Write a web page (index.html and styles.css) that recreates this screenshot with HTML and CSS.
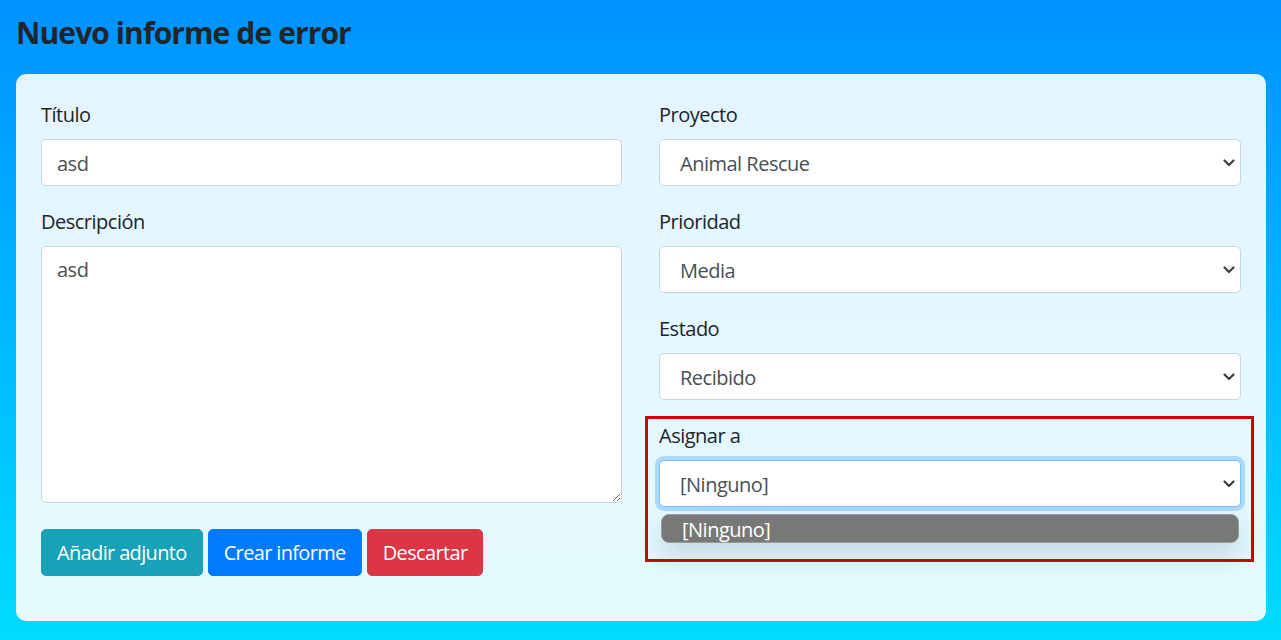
FILE: index.html
```html
<!DOCTYPE html>
<html lang="es">
<head>
<meta charset="utf-8">
<title>Nuevo informe de error</title>
<link rel="stylesheet" href="styles.css">
</head>
<body>
<h1 class="page-title">Nuevo informe de error</h1>
<form class="card">
  <div class="row">
    <div class="col">
      <div class="form-group">
        <label class="label">Título</label>
        <input class="form-control" type="text" value="asd">
      </div>
      <div class="form-group textarea-group">
        <label class="label">Descripción</label>
        <textarea class="form-control textarea">asd</textarea>
      </div>
      <div class="buttons">
        <button type="button" class="btn btn-info">Añadir adjunto</button>
        <button type="button" class="btn btn-primary">Crear informe</button>
        <button type="button" class="btn btn-danger">Descartar</button>
      </div>
    </div>
    <div class="col">
      <div class="form-group">
        <label class="label">Proyecto</label>
        <div class="select"><span>Animal Rescue</span><svg class="chev" width="12" height="8" viewBox="0 0 12 8"><polyline points="1.5,1.5 6,6 10.5,1.5" fill="none" stroke="#3c4043" stroke-width="2.2" stroke-linecap="round" stroke-linejoin="round"/></svg></div>
      </div>
      <div class="form-group">
        <label class="label">Prioridad</label>
        <div class="select"><span>Media</span><svg class="chev" width="12" height="8" viewBox="0 0 12 8"><polyline points="1.5,1.5 6,6 10.5,1.5" fill="none" stroke="#3c4043" stroke-width="2.2" stroke-linecap="round" stroke-linejoin="round"/></svg></div>
      </div>
      <div class="form-group">
        <label class="label">Estado</label>
        <div class="select"><span>Recibido</span><svg class="chev" width="12" height="8" viewBox="0 0 12 8"><polyline points="1.5,1.5 6,6 10.5,1.5" fill="none" stroke="#3c4043" stroke-width="2.2" stroke-linecap="round" stroke-linejoin="round"/></svg></div>
      </div>
      <div class="form-group assign-group">
        <label class="label">Asignar a</label>
        <div class="select focused"><span>[Ninguno]</span><svg class="chev" width="12" height="8" viewBox="0 0 12 8"><polyline points="1.5,1.5 6,6 10.5,1.5" fill="none" stroke="#3c4043" stroke-width="2.2" stroke-linecap="round" stroke-linejoin="round"/></svg></div>
        <div class="dropdown-list"><span>[Ninguno]</span></div>
        <div class="highlight-box"></div>
      </div>
    </div>
  </div>
</form>
</body>
</html>
```

FILE: styles.css
```css
* { box-sizing: border-box; }

html, body { height: 100%; }

body {
  margin: 0;
  min-height: 640px;
  padding: 15px 15px 0 16px;
  background: linear-gradient(180deg, #0092ff 0%, #00dcff 100%);
  font-family: "Open Sans", "Noto Sans", sans-serif;
  font-size: 20px;
  line-height: 1.5;
  letter-spacing: -0.5px;
  color: #212529;
  overflow: hidden;
}

.page-title {
  margin: 0 0 23px 0;
  font-size: 30px;
  line-height: 36px;
  font-weight: 700;
  letter-spacing: -0.9px;
  color: #212529;
}

.card {
  width: 1250px;
  padding: 25px;
  border-radius: 10px;
  background: rgba(255, 255, 255, 0.895);
}

.row {
  display: grid;
  grid-template-columns: 581px 582px;
  column-gap: 37px;
}

.col { display: flex; flex-direction: column; }

.form-group {
  display: flex;
  flex-direction: column;
  margin-bottom: 20px;
  position: relative;
}

.textarea-group { margin-bottom: 26px; }

.label {
  display: block;
  line-height: 30px;
  margin-top: 1px;
  margin-bottom: 9px;
  color: #212529;
}

.form-control {
  display: block;
  width: 100%;
  height: 47px;
  padding: 8px 15px 7px;
  font-family: inherit;
  font-size: 20px;
  line-height: 30px;
  letter-spacing: -0.5px;
  color: #495057;
  background: #fff;
  border: 1px solid #ced4da;
  border-radius: 5px;
  outline: none;
}

.textarea {
  height: 257px;
  resize: vertical;
}

.select {
  display: flex;
  align-items: center;
  justify-content: space-between;
  height: 47px;
  padding: 2px 5px 0 20px;
  background: #fff;
  border: 1px solid #ced4da;
  border-radius: 5px;
  color: #495057;
  line-height: 30px;
}

.select .chev { flex: none; margin-top: -2px; }

.select.focused {
  border-color: #80bdff;
  box-shadow: 0 0 0 4px rgba(0, 123, 255, 0.25);
}

.buttons {
  display: flex;
  gap: 5px;
  margin-bottom: 20px;
}

.btn {
  height: 47px;
  padding: 8px 15px 7px;
  font-family: inherit;
  font-size: 20px;
  line-height: 30px;
  letter-spacing: -0.65px;
  color: #fff;
  border: 1px solid transparent;
  border-radius: 5px;
  cursor: pointer;
}

.btn-info { background: #17a2b8; border-color: #17a2b8; }
.btn-primary { background: #007bff; border-color: #007bff; }
.btn-danger { background: #dc3545; border-color: #dc3545; }

.dropdown-list {
  position: absolute;
  left: 2px;
  right: 2px;
  top: 94px;
  height: 29px;
  padding-left: 20px;
  background: #787878;
  border: 1px solid #9a9a9a;
  border-radius: 8px;
  color: #fff;
  line-height: 30px;
  overflow: hidden;
  box-shadow: 0 12px 30px rgba(0, 40, 60, 0.18);
}

.highlight-box {
  position: absolute;
  left: -14px;
  right: -13px;
  top: -4px;
  height: 146px;
  border: 3px solid #cc0000;
  pointer-events: none;
}
```
